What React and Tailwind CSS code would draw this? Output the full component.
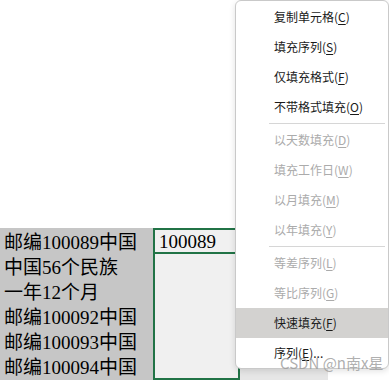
import React from 'react';

const menuFont = { fontFamily: '"Noto Sans CJK SC", "Noto Sans", sans-serif' };
const cellFont = { fontFamily: '"Liberation Serif", "Noto Sans CJK SC", serif' };

const groups = [
    [
        { label: '复制单元格', key: 'C' },
        { label: '填充序列', key: 'S' },
        { label: '仅填充格式', key: 'F' },
        { label: '不带格式填充', key: 'O' },
    ],
    [
        { label: '以天数填充', key: 'D', disabled: true },
        { label: '填充工作日', key: 'W', disabled: true },
        { label: '以月填充', key: 'M', disabled: true },
        { label: '以年填充', key: 'Y', disabled: true },
    ],
    [
        { label: '等差序列', key: 'L', disabled: true },
        { label: '等比序列', key: 'G', disabled: true },
        { label: '快速填充', key: 'F', active: true },
        { label: '序列', key: 'E', tail: '...' },
    ],
];

const rows = ['邮编100089中国', '中国56个民族', '一年12个月', '邮编100092中国', '邮编100093中国', '邮编100094中国'];

// One row of the fill options menu
const MenuItem = ({ item }) => (
    <div
        className={`h-[30px] flex items-center pl-[38px] text-[12px] ${item.active ? 'bg-[#d3d2d0]' : ''} ${item.disabled ? 'text-[#ababab]' : 'text-[#1a1a1a]'}`}
    >
        <span>
            {item.label}(<span className="underline underline-offset-2">{item.key}</span>){item.tail}
        </span>
    </div>
);

const App = () => {
    return (
        <div className="relative w-[389px] h-[380px] bg-white overflow-hidden">
            {/* Sheet cells */}
            <div className="flex pt-[228px] h-[380px]">
                <div className="w-[153px] bg-[#c6c6c6] pt-[2px] text-[19px] text-black" style={cellFont}>
                    {rows.map((r) => (
                        <div key={r} className="h-[25px] leading-[25px] pl-[4px] whitespace-nowrap">{r}</div>
                    ))}
                </div>
                <div className="w-[87px] border-2 border-[#217346] bg-[#f0f0f0] flex flex-col">
                    <div className="h-[24px] leading-[24px] pl-[4px] text-[19px] text-black border-b-2 border-[#217346]" style={cellFont}>
                        100089
                    </div>
                </div>
                <div className="flex flex-col justify-end">
                    <div className="w-[88px] h-[12px] bg-[#e6e6e6]"></div>
                </div>
            </div>

            {/* Context menu */}
            <div
                className="absolute left-[235px] top-0 w-[154px] h-[369px] bg-white border border-[#c9c9c9] rounded-[6px] pt-[1px] shadow-[0_2px_6px_rgba(0,0,0,0.12)]"
                style={menuFont}
            >
                {groups.map((g, gi) => (
                    <div key={gi}>
                        {gi > 0 && (
                            <div className="h-[3px] pt-[1px]">
                                <div className="h-px ml-[33px] mr-[3px] bg-[#d6d6d6]"></div>
                            </div>
                        )}
                        {g.map((item) => (
                            <MenuItem key={item.label} item={item} />
                        ))}
                    </div>
                ))}
            </div>

            {/* Watermark */}
            <div className="absolute left-[280px] top-[353px] text-[15px] leading-[20px] text-[#9a9a9a]/80 whitespace-nowrap" style={menuFont}>
                CSDN @n南x星
            </div>
        </div>
    );
};

export default App;
